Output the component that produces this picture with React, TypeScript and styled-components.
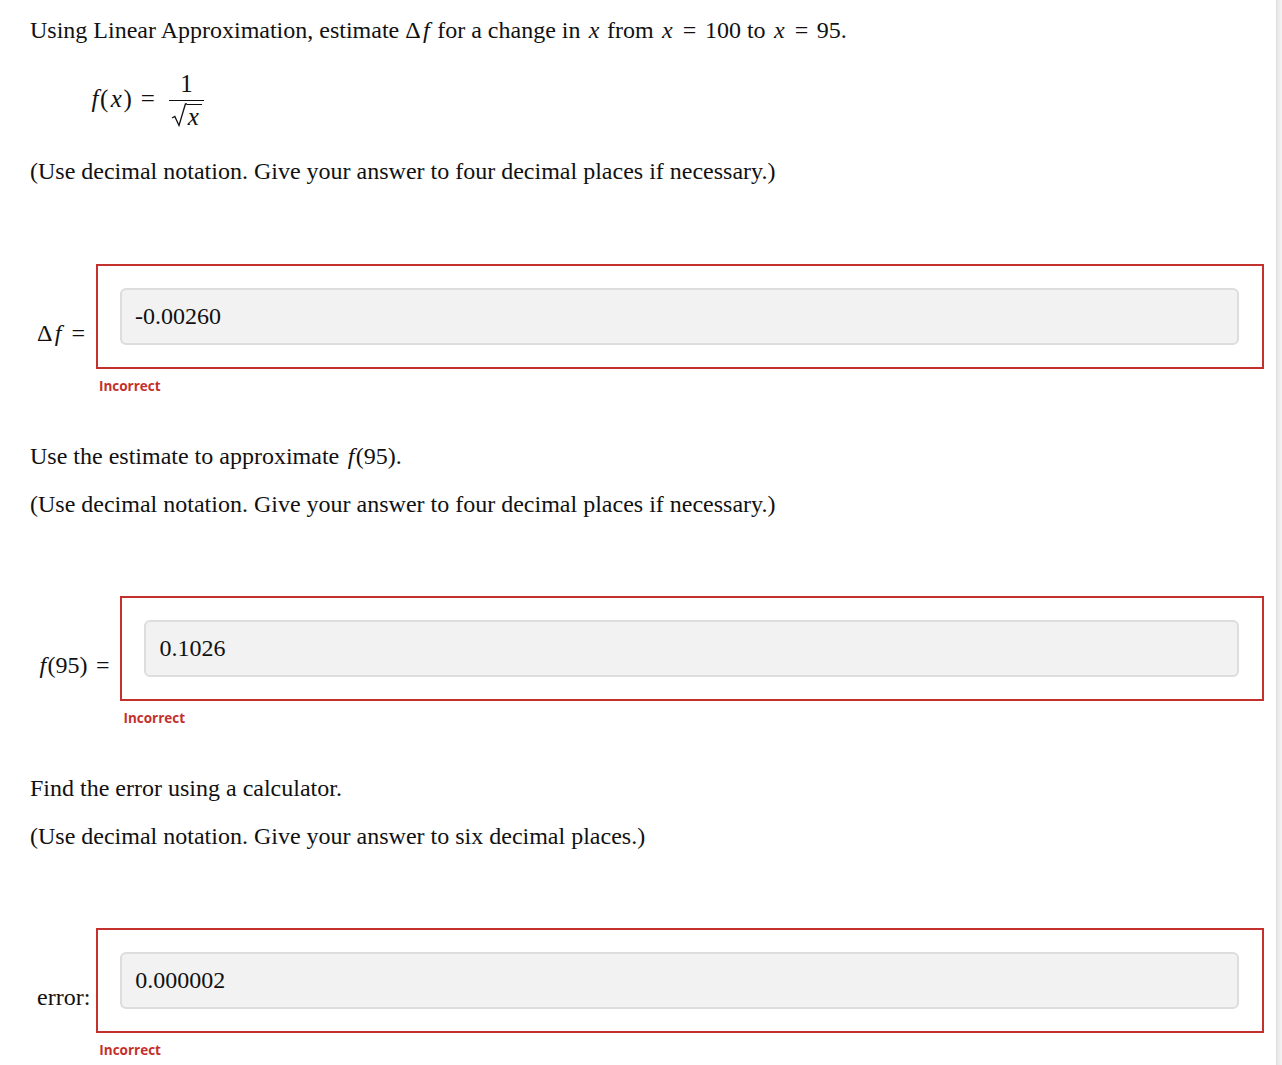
import React from "react";
import styled, { createGlobalStyle } from "styled-components";

const GlobalStyle = createGlobalStyle`
  html, body {
    margin: 0;
    padding: 0;
    background: #ffffff;
  }
  body {
    font-family: "Liberation Serif", "Times New Roman", serif;
    color: #111;
  }
`;

const Page = styled.div`
  display: flex;
  min-height: 1065px;
`;

const Content = styled.main`
  flex: 1;
  padding: 14px 12px 0 30px;
`;

const Gutter = styled.div`
  width: 5px;
  background: linear-gradient(to right, #e6e6e6, #f4f4f4);
  border-left: 1px solid #e0e0e0;
`;

const Para = styled.p<{ $gap?: number }>`
  margin: 0;
  margin-top: ${({ $gap }) => $gap ?? 0}px;
  font-size: 24px;
  line-height: 32px;
`;

const M = styled.i`
  font-style: italic;
  padding: 0 0.06em 0 0.1em;
`;

const Op = styled.span`
  margin: 0 0.36em;
`;

const Formula = styled.div`
  display: flex;
  align-items: center;
  gap: 3px;
  margin: 24px 0 0 59px;
  font-size: 25px;
`;

const Fraction = styled.span`
  display: inline-flex;
  flex-direction: column;
  align-items: center;
  padding: 0 2px;
`;

const Numerator = styled.span`
  align-self: stretch;
  text-align: center;
  line-height: 28px;
  padding-bottom: 2px;
  border-bottom: 1px solid #111;
`;

const Radical = styled.span`
  display: inline-flex;
  align-items: flex-start;
  padding: 2px 2px 0;
`;

const RadicalSign = styled.svg`
  width: 16px;
  height: 25px;
  display: block;
`;

const Radicand = styled.span`
  border-top: 1.3px solid #111;
  margin-top: 1px;
  padding: 0 3px 0 1px;
  line-height: 23px;
  font-style: italic;
`;

const AnswerRow = styled.div<{ $gap: number }>`
  display: flex;
  align-items: flex-start;
  gap: 6px;
  margin-top: ${({ $gap }) => $gap}px;
  padding-left: 7px;
`;

const Label = styled.span`
  margin-top: 53px;
  font-size: 24px;
  line-height: 32px;
  white-space: nowrap;

  ${Op}:last-child {
    margin-right: 0.2em;
  }
`;

const AnswerColumn = styled.div`
  flex: 1;
  display: flex;
  flex-direction: column;
`;

const AnswerBox = styled.div`
  border: 2px solid #c4302b;
  padding: 22px 23px 22px 22px;
`;

const AnswerInput = styled.input`
  box-sizing: border-box;
  width: 100%;
  height: 57px;
  padding: 0 13px;
  border: 2px solid #dddddd;
  border-radius: 6px;
  background: #f2f2f2;
  font-family: "Liberation Serif", "Times New Roman", serif;
  font-size: 24px;
  color: #111;
  outline: none;
`;

const Feedback = styled.span`
  margin: 7px 0 0 3px;
  font-family: "Open Sans", "Liberation Sans", sans-serif;
  font-weight: 700;
  font-size: 13.5px;
  line-height: 20px;
  color: #c4302b;
`;

type AnswerProps = {
  label: React.ReactNode;
  value: string;
  gap: number;
};

const Answer = ({ label, value, gap }: AnswerProps) => (
  <AnswerRow $gap={gap}>
    <Label>{label}</Label>
    <AnswerColumn>
      <AnswerBox>
        <AnswerInput readOnly value={value} />
      </AnswerBox>
      <Feedback>Incorrect</Feedback>
    </AnswerColumn>
  </AnswerRow>
);

export default function App() {
  return (
    <>
      <GlobalStyle />
      <Page>
        <Content>
          <Para>
            Using Linear Approximation, estimate Δ<M>f</M> for a change in <M>x</M> from{" "}
            <M>x</M>
            <Op>=</Op>100 to <M>x</M>
            <Op>=</Op>95.
          </Para>
          <Formula>
            <span>
              <M>f</M>(<M>x</M>)<Op>=</Op>
            </span>
            <Fraction>
              <Numerator>1</Numerator>
              <Radical>
                <RadicalSign viewBox="0 0 16 25">
                  <path
                    d="M1 15 L3.8 13.5 L8 22.5 L14.4 1 L16 1"
                    fill="none"
                    stroke="#111"
                    strokeWidth="1.3"
                    strokeLinejoin="miter"
                  />
                </RadicalSign>
                <Radicand>x</Radicand>
              </Radical>
            </Fraction>
          </Formula>
          <Para $gap={27}>
            (Use decimal notation. Give your answer to four decimal places if necessary.)
          </Para>
          <Answer
            gap={77}
            value="-0.00260"
            label={
              <>
                Δ<M>f</M>
                <Op>=</Op>
              </>
            }
          />
          <Para $gap={44}>
            Use the estimate to approximate <M>f</M>(95).
          </Para>
          <Para $gap={16}>
            (Use decimal notation. Give your answer to four decimal places if necessary.)
          </Para>
          <Answer
            gap={76}
            value="0.1026"
            label={
              <>
                <M>f</M>(95)<Op>=</Op>
              </>
            }
          />
          <Para $gap={44}>Find the error using a calculator.</Para>
          <Para $gap={16}>
            (Use decimal notation. Give your answer to six decimal places.)
          </Para>
          <Answer gap={76} value="0.000002" label="error:" />
        </Content>
        <Gutter />
      </Page>
    </>
  );
}
